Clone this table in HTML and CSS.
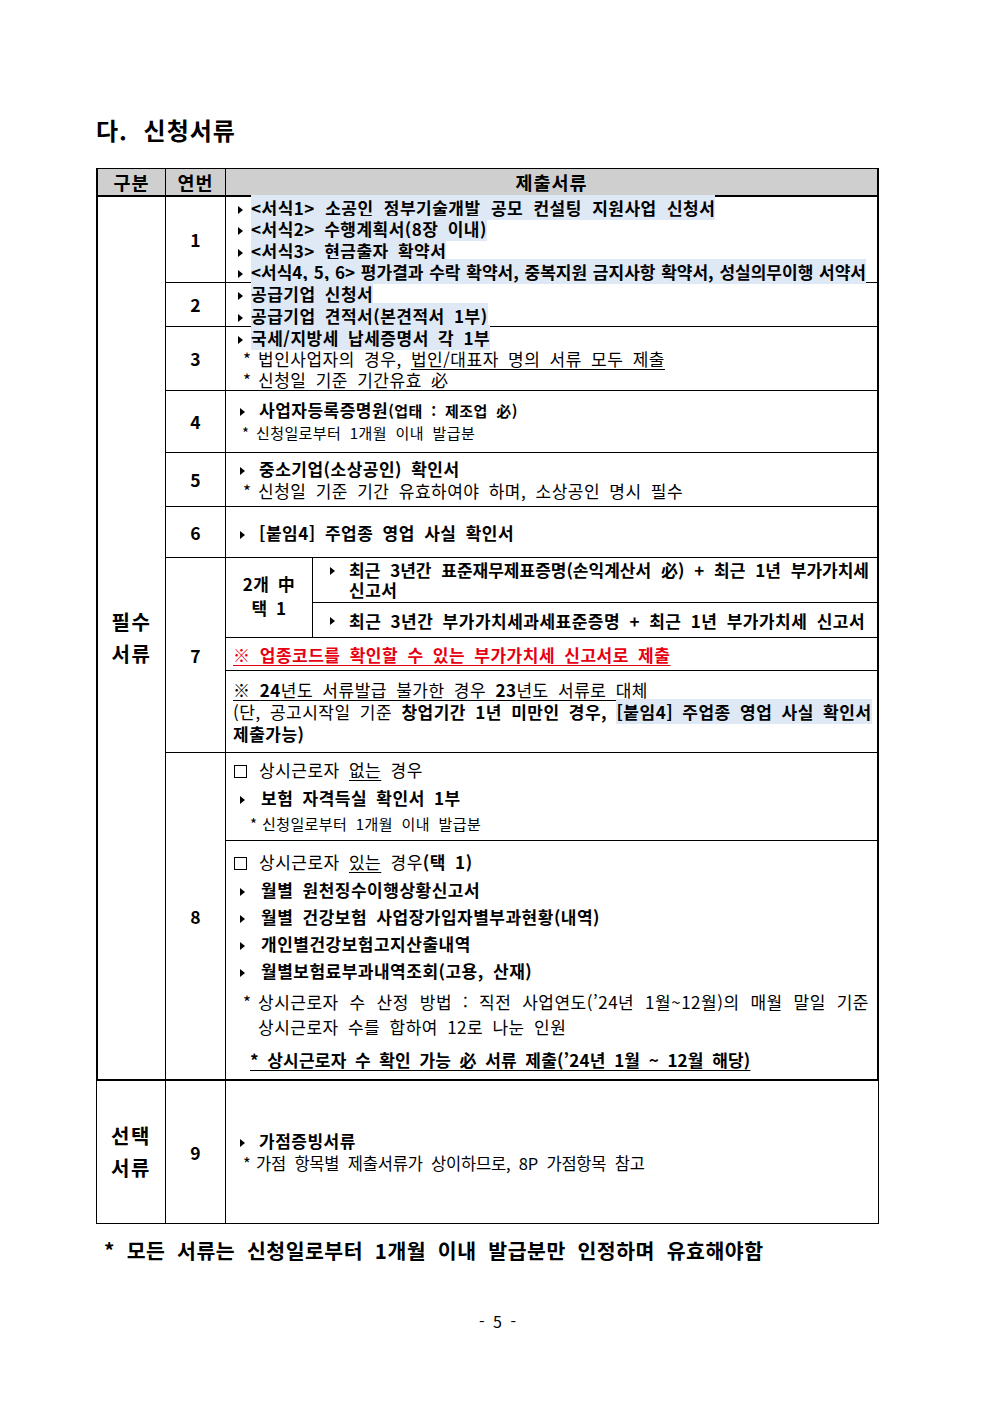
FILE: index.html
```html
<!DOCTYPE html>
<html lang="ko">
<head>
<meta charset="utf-8">
<title>신청서류</title>
<link rel="stylesheet" href="styles.css">
</head>
<body>
<div class="page">
  <h2 class="title">다. 신청서류</h2>

  <div class="doc-table">
    <div class="cell head c-first">구분</div>
    <div class="cell head">연번</div>
    <div class="cell head wide c-last">제출서류</div>

    <div class="cell group must">필수<br>서류</div>

    <div class="cell num">1</div>
    <div class="cell content wide c-last lh21">
      <p class="ln b wider"><i class="tri"></i><span class="hl">&lt;서식1&gt; 소공인 정부기술개발 공모 컨설팅 지원사업 신청서</span></p>
      <p class="ln b"><i class="tri"></i><span class="hl">&lt;서식2&gt; 수행계획서(8장 이내)</span></p>
      <p class="ln b"><i class="tri"></i><span class="hl">&lt;서식3&gt; 현금출자 확약서</span></p>
      <p class="ln b sq"><i class="tri"></i><span class="hl">&lt;서식4, 5, 6&gt; 평가결과 수락 확약서, 중복지원 금지사항 확약서, 성실의무이행 서약서</span></p>
    </div>

    <div class="cell num">2</div>
    <div class="cell content wide c-last lh21">
      <p class="ln b"><i class="tri"></i><span class="hl">공급기업 신청서</span></p>
      <p class="ln b"><i class="tri"></i><span class="hl">공급기업 견적서(본견적서 1부) </span></p>
    </div>

    <div class="cell num">3</div>
    <div class="cell content wide c-last lh21">
      <p class="ln b"><i class="tri"></i><span class="hl">국세/지방세 납세증명서 각 1부</span></p>
      <p class="ln note"><span class="ast">*</span>법인사업자의 경우, <u>법인/대표자 명의 서류 모두 제출</u></p>
      <p class="ln note"><span class="ast">*</span>신청일 기준 기간유효 必</p>
    </div>

    <div class="cell num">4</div>
    <div class="cell content wide c-last lh22">
      <p class="ln b"><i class="tri gap"></i>사업자등록증명원<span class="small">(업태 : 제조업 必)</span></p>
      <p class="ln note small"><span class="ast a-sm">*</span>신청일로부터 1개월 이내 발급분</p>
    </div>

    <div class="cell num">5</div>
    <div class="cell content wide c-last lh21">
      <p class="ln b"><i class="tri gap"></i>중소기업(소상공인) 확인서</p>
      <p class="ln note"><span class="ast">*</span>신청일 기준 기간 유효하여야 하며, 소상공인 명시 필수</p>
    </div>

    <div class="cell num">6</div>
    <div class="cell content wide c-last">
      <p class="ln b"><i class="tri gap"></i>[붙임4] 주업종 영업 사실 확인서</p>
    </div>

    <div class="cell num span4">7</div>
    <div class="cell pick span2">2개 中<br>택 1</div>
    <div class="cell content sub c-last lh20">
      <div class="tri-row b">
        <i class="tri gap"></i>
        <div class="tri-text">
          <p class="ln sq">최근 3년간 표준재무제표증명(손익계산서 <span class="ib">必)</span> + 최근 1년 부가가치세</p>
          <p class="ln">신고서</p>
        </div>
      </div>
    </div>
    <div class="cell content sub c-last">
      <div class="tri-row b">
        <i class="tri gap"></i>
        <div class="tri-text">
          <p class="ln">최근 3년간 부가가치세과세표준증명 + 최근 1년 부가가치세 신고서</p>
        </div>
      </div>
    </div>
    <div class="cell content wide c-last tight">
      <p class="ln b red"><u>※ 업종코드를 확인할 수 있는 부가가치세 신고서로 제출</u></p>
    </div>
    <div class="cell content wide c-last tight lh22">
      <p class="ln"><u>※ <b>24</b>년도 서류발급 불가한 경우 <b>23</b>년도 서류로 대체</u></p>
      <p class="ln justify">(단, 공고시작일 기준 <b>창업기간 1년 미만인 경우,</b> <b class="hl">[붙임4] 주업종 영업 사실 확인서</b></p>
      <p class="ln"><b>제출가능)</b></p>
    </div>

    <div class="cell num span2 bottom">8</div>
    <div class="cell content wide c-last">
      <p class="ln row-box"><i class="box"></i>상시근로자 <u>없는</u> 경우</p>
      <p class="ln b row-item"><i class="tri gap2"></i>보험 자격득실 확인서 1부</p>
      <p class="ln note small row-sub"><span class="ast a-sub">*</span>신청일로부터 1개월 이내 발급분</p>
    </div>
    <div class="cell content wide c-last bottom">
      <p class="ln row-box"><i class="box"></i>상시근로자 <u>있는</u> 경우<b>(택 1)</b></p>
      <p class="ln b row-item"><i class="tri gap2"></i>월별 원천징수이행상황신고서</p>
      <p class="ln b row-item"><i class="tri gap2"></i>월별 건강보험 사업장가입자별부과현황(내역)</p>
      <p class="ln b row-item"><i class="tri gap2"></i>개인별건강보험고지산출내역</p>
      <p class="ln b row-item"><i class="tri gap2"></i>월별보험료부과내역조회(고용, 산재)</p>
      <div class="calc">
        <p class="ln justify"><span class="ast">*</span>상시근로자 수 산정 방법 : 직전 사업연도(’24년 1월~12월)의 매월 말일 기준</p>
        <p class="ln indent">상시근로자 수를 합하여 12로 나눈 인원</p>
      </div>
      <p class="ln b confirm"><u>* 상시근로자 수 확인 가능 必 서류 제출(’24년 1월 ~ 12월 해당)</u></p>
    </div>

    <div class="cell group choice">선택<br>서류</div>
    <div class="cell num">9</div>
    <div class="cell content wide c-thin lh22">
      <p class="ln b"><i class="tri gap"></i>가점증빙서류</p>
      <p class="ln note narrow"><span class="ast a-sm2">*</span>가점 항목별 제출서류가 상이하므로, 8P 가점항목 참고</p>
    </div>
  </div>

  <p class="footnote">* 모든 서류는 신청일로부터 1개월 이내 발급분만 인정하며 유효해야함</p>
  <p class="page-no">- 5 -</p>
</div>
</body>
</html>
```

FILE: styles.css
```css
* { box-sizing: border-box; }

html, body {
  margin: 0;
  padding: 0;
  background: #ffffff;
}

body {
  color: #000000;
  font-family: "Noto Sans CJK KR", "Noto Sans", sans-serif;
}

.page {
  width: 992px;
  height: 1403px;
  padding: 112px 0 0 96px;
}

.title {
  margin: 0;
  height: 56px;
  font-size: 24px;
  line-height: 36px;
  font-weight: 700;
  letter-spacing: 1px;
  word-spacing: 8px;
}

/* ---------- table grid ---------- */
.doc-table {
  display: grid;
  width: 783px;
  grid-template-columns: 70px 60px 87px 566px;
  grid-template-rows: 29px 86px 44px 64px 62px 54px 51px 45px 35px 33px 82px 88px 240px 143px;
}

.cell {
  border-right: 1px solid #000;
  border-bottom: 1px solid #000;
  display: flex;
  flex-direction: column;
  justify-content: center;
  min-width: 0;
}

.head {
  border-top: 1px solid #000;
  border-bottom: 2px solid #000;
  background: #cfcfcf;
  align-items: center;
  font-size: 18.5px;
  font-weight: 700;
  letter-spacing: 1px;
  line-height: 24px;
}

.c-first { border-left: 2px solid #000; }
.c-last { border-right: 2px solid #000; }
.wide { grid-column: 3 / 5; }
.span2 { grid-row: span 2; }
.span4 { grid-row: span 4; }
.bottom { border-bottom: 2px solid #000; }

.group {
  align-items: center;
  text-align: center;
  font-size: 20px;
  font-weight: 700;
  letter-spacing: 1.5px;
  line-height: 32px;
}

.must {
  grid-row: span 12;
  border-left: 2px solid #000;
  border-bottom: 2px solid #000;
}

.choice {
  border-left: 1px solid #000;
}

.num {
  align-items: center;
  font-size: 17.5px;
  font-weight: 700;
}

.pick {
  align-items: center;
  text-align: center;
  font-size: 17px;
  font-weight: 700;
  letter-spacing: 0.5px;
  word-spacing: 3px;
  line-height: 24px;
  padding-bottom: 4px;
}

.content {
  padding: 0 8px 0 12px;
  font-size: 17px;
  letter-spacing: 0.5px;
  line-height: 21px;
  word-spacing: 4px;
}

.content.tight { padding-left: 7px; }
.content.sub { padding-left: 15px; }
.c-thin { border-right: 1px solid #000; }

.lh20 { line-height: 20px; }
.lh21 { line-height: 21.3px; }
.lh22 { line-height: 22px; }

/* ---------- text lines ---------- */
.ln {
  margin: 0;
  white-space: nowrap;
}

.b { font-weight: 700; }
.small { font-size: 15px; letter-spacing: 0.4px; }

.note { font-weight: 400; }

.hl { background: #dfe9f5; }

.red { color: #e60012; }

u {
  text-decoration: underline;
  text-decoration-thickness: 1px;
  text-underline-offset: 3px;
}

.justify {
  text-align: justify;
  text-align-last: justify;
}

.sq {
  letter-spacing: 0;
  word-spacing: 0;
  text-align: justify;
  text-align-last: justify;
}

.content > .sq { padding-right: 3px; }

.wider { word-spacing: 5px; }

.ib { display: inline-block; }

.tri {
  display: inline-block;
  width: 0;
  height: 0;
  border-left: 5px solid #000;
  border-top: 4px solid transparent;
  border-bottom: 4px solid transparent;
  margin-right: 8px;
  vertical-align: 1px;
}

.tri.gap { margin-left: 2px; margin-right: 14px; }
.tri.gap2 { margin-left: 2px; margin-right: 16px; }

.ast {
  display: inline-block;
  width: 20px;
  padding-left: 5px;
  word-spacing: 0;
}

.ast.a-sm { width: 18px; padding-left: 4px; }
.ast.a-sm2 { width: 18px; padding-left: 5px; }
.ast.a-sub { width: 12px; padding-left: 0; }

.tri-row {
  display: flex;
  align-items: flex-start;
}

.tri-row .tri { margin-top: 7px; flex: none; }

.tri-text {
  flex: 1;
  min-width: 0;
}

.box {
  display: inline-block;
  width: 13px;
  height: 13px;
  border: 1px solid #000;
  margin: 0 12px 0 -4px;
  vertical-align: -1px;
}

.row-box { line-height: 28px; }
.row-item { line-height: 27px; }
.row-sub { padding-left: 12px; line-height: 26px; }

.calc {
  margin-top: 5px;
  line-height: 25px;
}

.indent { padding-left: 20px; }

.confirm {
  margin-top: 8px;
  padding-left: 12px;
  line-height: 25px;
  letter-spacing: 0.2px;
  word-spacing: 3.5px;
}

.narrow { font-size: 16.5px; letter-spacing: -0.2px; }

/* ---------- footer ---------- */
.footnote {
  margin: 12px 0 0 8px;
  font-size: 20.5px;
  font-weight: 700;
  letter-spacing: 0.5px;
  line-height: 28px;
  word-spacing: 5.5px;
}

.page-no {
  margin: 47px 0 0 10px;
  width: 783px;
  text-align: center;
  font-size: 16px;
  line-height: 20px;
  word-spacing: 4px;
}
```
